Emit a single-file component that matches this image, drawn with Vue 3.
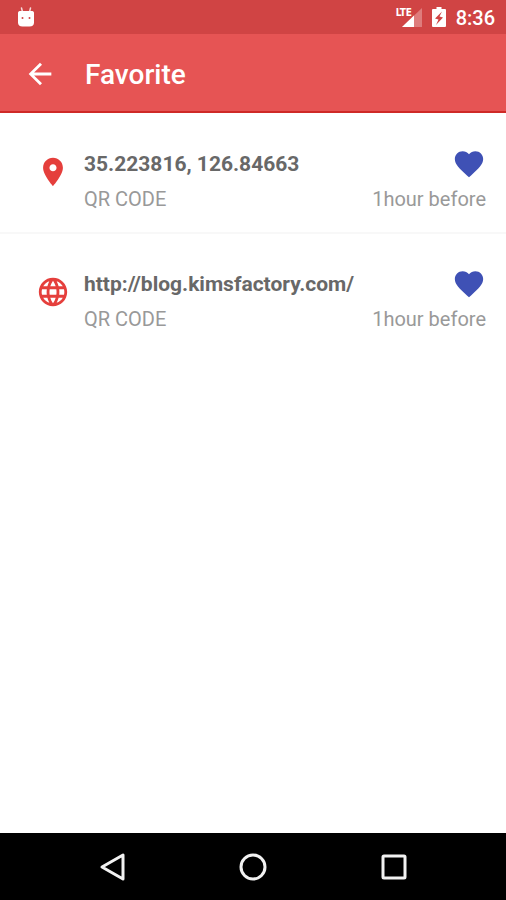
<script setup>
const items = [
  { id: 1, kind: 'place', title: '35.223816, 126.84663', type: 'QR CODE', time: '1hour before' },
  { id: 2, kind: 'web', title: 'http://blog.kimsfactory.com/', type: 'QR CODE', time: '1hour before' },
]

const icons = {
  place: 'M12 2C8.13 2 5 5.13 5 9c0 5.25 7 13 7 13s7-7.75 7-13c0-3.87-3.13-7-7-7zm0 9.5c-1.38 0-2.5-1.12-2.5-2.5s1.12-2.5 2.5-2.5 2.5 1.12 2.5 2.5-1.12 2.5-2.5 2.5z',
  web: 'M11.99 2C6.47 2 2 6.48 2 12s4.47 10 9.99 10C17.52 22 22 17.52 22 12S17.52 2 11.99 2zm6.93 6h-2.95c-.32-1.25-.78-2.45-1.38-3.56 1.84.63 3.37 1.91 4.33 3.56zM12 4.04c.83 1.2 1.48 2.53 1.91 3.96h-3.82c.43-1.43 1.08-2.76 1.91-3.96zM4.26 14C4.1 13.36 4 12.69 4 12s.1-1.36.26-2h3.38c-.08.66-.14 1.32-.14 2s.06 1.34.14 2H4.26zm.82 2h2.95c.32 1.25.78 2.45 1.38 3.56-1.84-.63-3.37-1.9-4.33-3.56zm2.95-8H5.08c.96-1.66 2.49-2.93 4.33-3.56C8.81 5.55 8.35 6.75 8.03 8zM12 19.96c-.83-1.2-1.48-2.53-1.91-3.96h3.82c-.43 1.43-1.08 2.76-1.91 3.96zM14.34 14H9.66c-.09-.66-.16-1.32-.16-2s.07-1.35.16-2h4.68c.09.65.16 1.32.16 2s-.07 1.34-.16 2zm.25 5.56c.6-1.11 1.06-2.31 1.38-3.56h2.95c-.96 1.65-2.49 2.93-4.33 3.56zM16.36 14c.08-.66.14-1.32.14-2s-.06-1.34-.14-2h3.38c.16.64.26 1.31.26 2s-.1 1.36-.26 2h-3.38z',
}
</script>

<template>
  <div class="screen">
    <div class="status">
      <svg class="bot" viewBox="0 0 18 20" aria-hidden="true">
        <path d="M4.500 1l1 4M13.500 1l-1 4" stroke="#fff" stroke-opacity=".8" stroke-width="1.500" stroke-linecap="round" />
        <path d="M1 6C1 4.500 2 4 3.500 4h11C16 4 17 4.500 17 6v9.500c0 2.500-1.500 4-4.500 4h-7C2.500 19.500 1 18 1 15.500z" fill="#fff" />
        <circle cx="5.500" cy="11" r="1" fill="#d04444" />
        <circle cx="12.500" cy="11" r="1" fill="#d04444" />
      </svg>
      <div class="indicators">
        <div class="signal">
          <svg viewBox="0 0 26 22" aria-hidden="true">
            <path d="M26 2v19H6z" fill="#fff" fill-opacity=".3" />
            <path d="M18 9.600V21H6z" fill="#fff" />
          </svg>
          <span class="lte">LTE</span>
        </div>
        <svg class="battery" viewBox="0 0 14 20" aria-hidden="true">
          <path fill="#fff" fill-rule="evenodd" d="M4.500 0h5v2H13q1 0 1 1v16q0 1-1 1H1q-1 0-1-1V3q0-1 1-1h3.500zM10 4.500L3 11.500l3.500 1L4 18 11 10.500l-3.500-1z" />
        </svg>
        <span class="clock">8:36</span>
      </div>
    </div>

    <header class="bar">
      <button class="icon-button" type="button" aria-label="Back">
        <svg class="icon" viewBox="0 0 24 24"><path fill="#fff" d="M20 11H7.830l5.590-5.590L12 4l-8 8 8 8 1.410-1.410L7.830 13H20v-2z" /></svg>
      </button>
      <h1>Favorite</h1>
    </header>

    <main>
      <ul class="list">
        <li v-for="item in items" :key="item.id" class="row">
          <svg class="icon kind" viewBox="0 0 24 24" aria-hidden="true"><path :d="icons[item.kind]" /></svg>
          <div class="body">
            <div class="line">
              <span class="title">{{ item.title }}</span>
              <button class="icon-button" type="button" aria-label="Remove favorite">
                <svg class="icon heart" viewBox="0 0 24 24"><path d="M12 21.350l-1.450-1.320C5.400 15.360 2 12.280 2 8.500 2 5.420 4.420 3 7.500 3c1.740 0 3.410.810 4.500 2.090C13.090 3.810 14.760 3 16.500 3 19.580 3 22 5.420 22 8.500c0 3.780-3.400 6.860-8.550 11.540L12 21.350z" /></svg>
              </button>
            </div>
            <div class="line meta">
              <span>{{ item.type }}</span>
              <span>{{ item.time }}</span>
            </div>
          </div>
        </li>
      </ul>
    </main>

    <nav class="nav">
      <button class="icon-button" type="button" aria-label="Back">
        <svg class="icon" viewBox="0 0 34 34"><path d="M28 5v24L7 17z" /></svg>
      </button>
      <button class="icon-button" type="button" aria-label="Home">
        <svg class="icon" viewBox="0 0 34 34"><circle cx="17" cy="17" r="12" /></svg>
      </button>
      <button class="icon-button" type="button" aria-label="Recent apps">
        <svg class="icon" viewBox="0 0 34 34"><rect x="6" y="6" width="22" height="22" rx="1" /></svg>
      </button>
    </nav>
  </div>
</template>

<style>
body {
  margin: 0;
}
</style>

<style scoped>
.screen {
  display: flex;
  flex-direction: column;
  min-height: 100vh;
  background: #fff;
  font-family: Roboto, sans-serif;
}
.status {
  display: flex;
  align-items: center;
  justify-content: space-between;
  height: 34px;
  padding: 0 11px 0 17px;
  background: #d04444;
  color: #fff;
}
.bot {
  width: 18px;
  height: 20px;
  fill: none;
}
.indicators {
  display: flex;
  align-items: center;
  gap: 10px;
}
.signal {
  position: relative;
  width: 26px;
  height: 22px;
}
.signal svg {
  display: block;
  width: 26px;
  height: 22px;
}
.lte {
  position: absolute;
  top: 1px;
  left: 0;
  font-family: "Liberation Sans Narrow", "DejaVu Sans Condensed", sans-serif;
  font-size: 10px;
  font-weight: 700;
  line-height: 12px;
}
.battery {
  width: 14px;
  height: 20px;
}
.clock {
  font-size: 20px;
  font-weight: 500;
  line-height: 24px;
  padding-top: 2px;
}
.bar {
  display: flex;
  align-items: center;
  gap: 28px;
  height: 75px;
  padding: 2px 0 0 23px;
  border-bottom: 2px solid #cf2a27;
  background: #e65454;
  color: #fff;
}
h1 {
  margin: 0;
  padding-top: 2px;
  font-size: 28px;
  font-weight: 500;
  line-height: 32px;
}
.icon-button {
  display: block;
  padding: 0;
  border: 0;
  background: none;
}
.icon {
  display: block;
  flex: none;
  width: 34px;
  height: 34px;
}
main {
  flex: 1;
}
.list {
  margin: 0;
  padding: 1px 0 0;
  list-style: none;
}
.row {
  display: flex;
  align-items: center;
  gap: 14px;
  padding: 33px 20px 20px 36px;
  border-bottom: 2px solid #f8f8f8;
}
.row:last-child {
  border-bottom-color: transparent;
}
.kind {
  align-self: flex-start;
  margin-top: 8px;
  fill: #e53f3c;
}
.body {
  flex: 1;
}
.line {
  display: flex;
  align-items: center;
  justify-content: space-between;
}
.title {
  color: #686868;
  font-size: 21px;
  font-weight: 700;
  line-height: 34px;
}
.heart {
  fill: #3f51b5;
}
.meta {
  padding-top: 5px;
  color: #999;
  font-size: 20px;
  line-height: 26px;
}
.nav {
  display: flex;
  align-items: center;
  justify-content: center;
  gap: 107px;
  height: 67px;
  background: #000;
}
.nav .icon {
  fill: none;
  stroke: #f2f2f2;
  stroke-width: 3;
  stroke-linejoin: round;
}
</style>
